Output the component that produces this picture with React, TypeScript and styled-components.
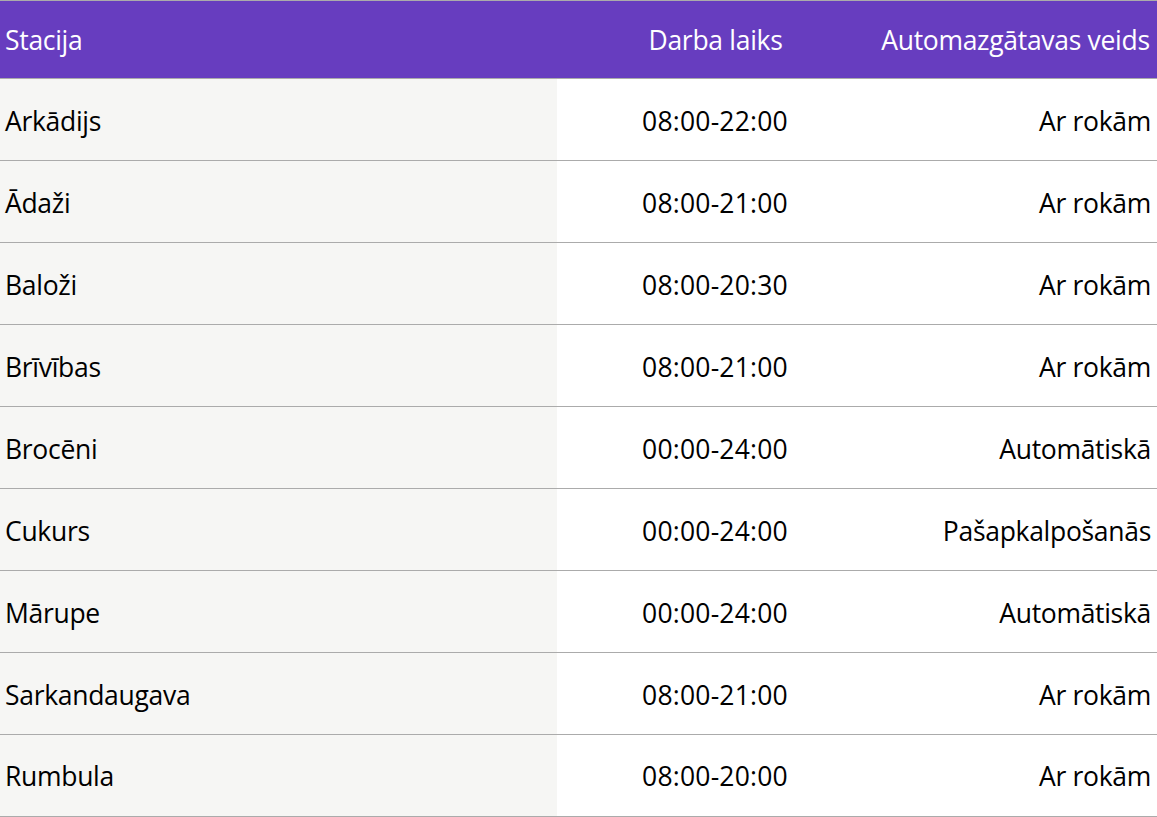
import React from "react";
import styled, { createGlobalStyle } from "styled-components";

const Global = createGlobalStyle`
  html, body { margin: 0; padding: 0; background: #ffffff; }
  body { font-family: "Open Sans", "Noto Sans", sans-serif; }
`;

const Table = styled.table`
  width: 1157px;
  border-collapse: collapse;
  table-layout: fixed;
  border-top: 1px solid #ababab;
  border-bottom: 2px solid #ababab;
  font-family: "Open Sans", "Noto Sans", sans-serif;
  font-size: 26.5px;
  color: #000;
`;

const HeadRow = styled.tr`
  background: #673dbf;
  height: 78px;
  border-bottom: 1px solid #ababab;
`;

const HeadCell = styled.th<{ $align: "left" | "center" }>`
  font-weight: 400;
  color: #ffffff;
  text-align: ${(p) => p.$align};
  padding: 0 5px;
  vertical-align: middle;
  letter-spacing: -0.3px;
`;

const Row = styled.tr`
  height: 82px;
  & + & {
    border-top: 1px solid #ababab;
  }
`;

const Cell = styled.td<{ $align: "left" | "center" | "right"; $shaded?: boolean; $digits?: boolean }>`
  text-align: ${(p) => p.$align};
  background: ${(p) => (p.$shaded ? "#f6f6f4" : "#ffffff")};
  padding: 2px 6px 0 5px;
  vertical-align: middle;
  letter-spacing: ${(p) => (p.$digits ? "0.2px" : "-0.3px")};
`;

const rows: [string, string, string][] = [
  ["Arkādijs", "08:00-22:00", "Ar rokām"],
  ["Ādaži", "08:00-21:00", "Ar rokām"],
  ["Baloži", "08:00-20:30", "Ar rokām"],
  ["Brīvības", "08:00-21:00", "Ar rokām"],
  ["Brocēni", "00:00-24:00", "Automātiskā"],
  ["Cukurs", "00:00-24:00", "Pašapkalpošanās"],
  ["Mārupe", "00:00-24:00", "Automātiskā"],
  ["Sarkandaugava", "08:00-21:00", "Ar rokām"],
  ["Rumbula", "08:00-20:00", "Ar rokām"],
];

export default function App() {
  return (
    <>
      <Global />
      <Table>
        <colgroup>
          <col style={{ width: 557 }} />
          <col style={{ width: 317 }} />
          <col style={{ width: 283 }} />
        </colgroup>
        <thead>
          <HeadRow>
            <HeadCell $align="left">Stacija</HeadCell>
            <HeadCell $align="center">Darba laiks</HeadCell>
            <HeadCell $align="center">Automazgātavas veids</HeadCell>
          </HeadRow>
        </thead>
        <tbody>
          {rows.map(([name, hours, type]) => (
            <Row key={name}>
              <Cell $align="left" $shaded>{name}</Cell>
              <Cell $align="center" $digits>{hours}</Cell>
              <Cell $align="right">{type}</Cell>
            </Row>
          ))}
        </tbody>
      </Table>
    </>
  );
}
